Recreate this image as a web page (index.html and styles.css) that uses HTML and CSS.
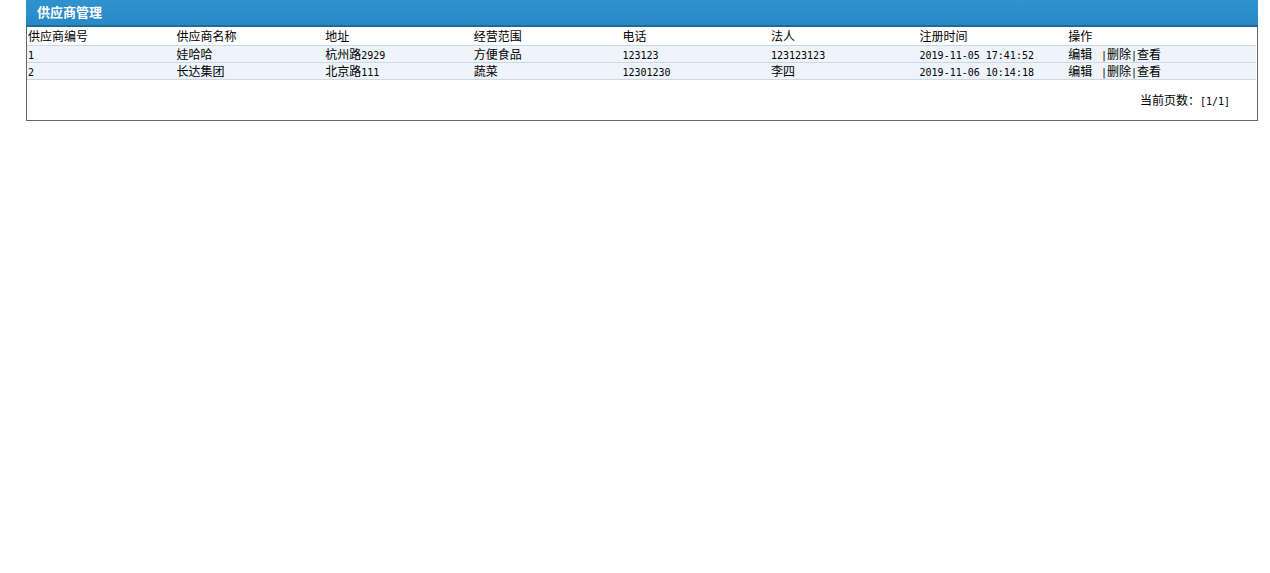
FILE: index.html
```html
<!DOCTYPE html>
<html lang="zh">
<head>
<meta charset="utf-8">
<title>供应商管理</title>
<link rel="stylesheet" href="styles.css">
</head>
<body>
<div class="panel">
  <div class="panel-head">供应商管理</div>
  <div class="panel-body">
    <table class="grid">
      <colgroup>
        <col class="c"><col class="c"><col class="c"><col class="c"><col class="c"><col class="c"><col class="c"><col>
      </colgroup>
      <thead>
        <tr><th>供应商编号</th><th>供应商名称</th><th>地址</th><th>经营范围</th><th>电话</th><th>法人</th><th>注册时间</th><th>操作</th></tr>
      </thead>
      <tbody>
        <tr><td><span class="n">1</span></td><td>娃哈哈</td><td>杭州路<span class="n">2929</span></td><td>方便食品</td><td><span class="n">123123</span></td><td><span class="n">123123123</span></td><td><span class="n">2019-11-05 17:41:52</span></td><td class="ops">编辑 <span class="n"> |</span>删除<span class="n">|</span>查看</td></tr>
        <tr><td><span class="n">2</span></td><td>长达集团</td><td>北京路<span class="n">111</span></td><td>蔬菜</td><td><span class="n">12301230</span></td><td>李四</td><td><span class="n">2019-11-06 10:14:18</span></td><td class="ops">编辑 <span class="n"> |</span>删除<span class="n">|</span>查看</td></tr>
      </tbody>
    </table>
    <div class="pager">当前页数：<span class="n">[1/1]</span></div>
  </div>
</div>
</body>
</html>
```

FILE: styles.css
```css
html, body {
  margin: 0;
  padding: 0;
  background: #fff;
}
body {
  font-family: "Noto Sans CJK SC", "Noto Sans", sans-serif;
  font-size: 12px;
  color: #000;
}
.panel {
  margin-left: 26px;
  width: 1232px;
}
.panel-head {
  height: 25px;
  line-height: 23px;
  background: linear-gradient(#2f93d0, #2888c4);
  border-bottom: 2px solid #1d6c9e;
  color: #fff;
  font-weight: bold;
  font-size: 13px;
  padding-left: 11px;
}
.panel-body {
  border: 1px solid #666;
  border-top: none;
  padding: 0 1px 0 0;
}
.grid {
  width: 1229px;
  border-collapse: collapse;
  table-layout: fixed;
}
.grid col.c {
  width: 148.6px;
}
.grid th, .grid td {
  padding: 0 0 0 1px;
  height: 16px;
  line-height: 16px;
  text-align: left;
  font-weight: normal;
  white-space: nowrap;
  overflow: hidden;
}
.grid thead th {
  height: 18px;
  line-height: 18px;
}
.grid tbody tr {
  background: #eef4f9;
  border-top: 1px solid #c9d9e8;
  border-bottom: 1px solid #c9d9e8;
}
.n {
  font-family: "DejaVu Sans Mono", "Liberation Mono", monospace;
  font-size: 10px;
  line-height: 1;
  white-space: pre;
}
.pager {
  text-align: right;
  padding: 12px 26px 12px 0;
  height: 16px;
  line-height: 16px;
}
```
